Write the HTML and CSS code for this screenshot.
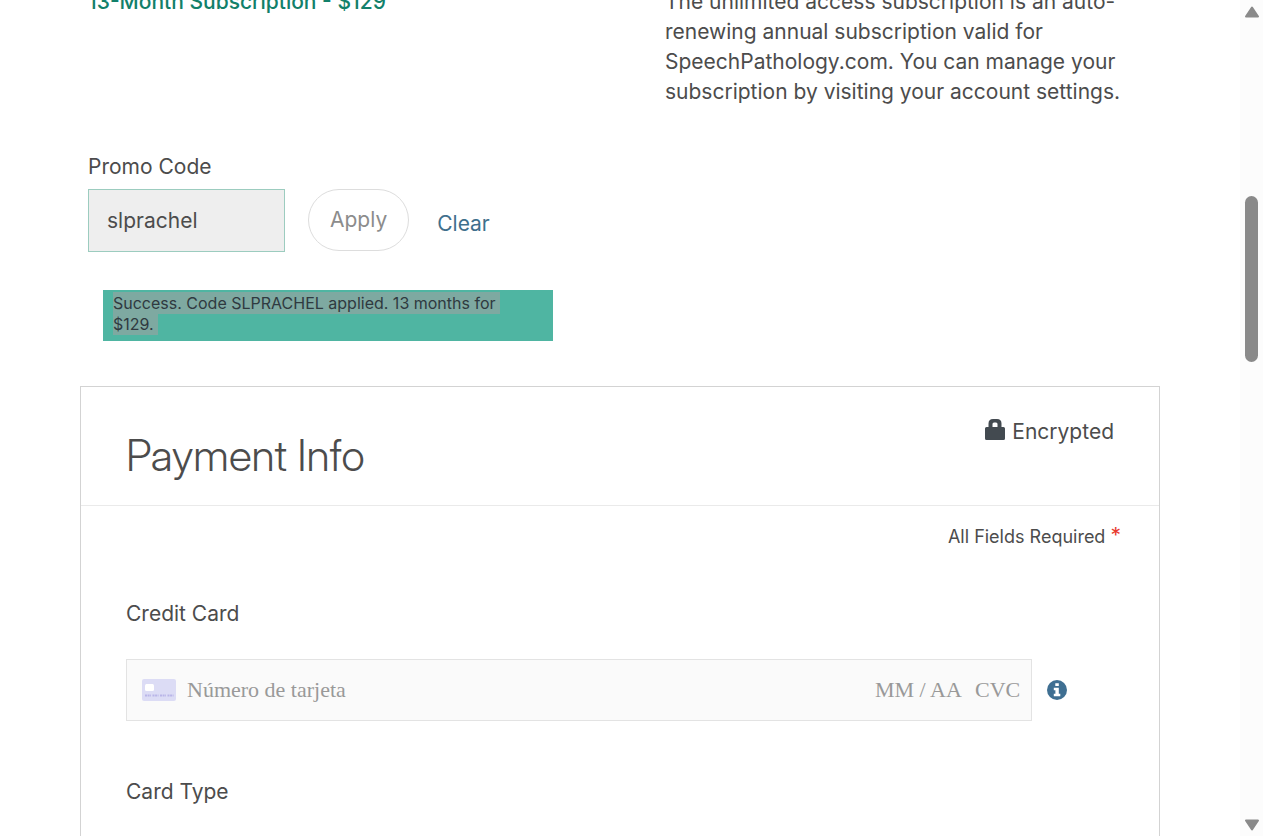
FILE: index.html
```html
<!DOCTYPE html>
<html lang="en">
<head>
<meta charset="utf-8">
<meta name="viewport" content="width=device-width, initial-scale=1">
<title>Payment Info</title>
<link rel="stylesheet" href="styles.css">
</head>
<body>
<div class="viewport">
  <main class="page">
    <section class="plan">
      <h2 class="plan-title">13-Month Subscription - $129</h2>
      <p class="plan-text">The unlimited access subscription is an auto-renewing annual subscription valid for SpeechPathology.com. You can manage your subscription by visiting your account settings.</p>
    </section>

    <form class="promo">
      <label class="label" for="promo-code">Promo Code</label>
      <div class="promo-row">
        <input class="promo-input" id="promo-code" type="text" value="slprachel" readonly>
        <button class="apply" type="button" disabled>Apply</button>
        <a class="clear" href="#">Clear</a>
      </div>
      <p class="alert" role="status"><mark class="selected">Success. Code SLPRACHEL applied. 13 months for $129.</mark></p>
    </form>

    <section class="payment">
      <header class="payment-head">
        <h1 class="payment-title">Payment Info</h1>
        <div class="encrypted">
          <svg class="lock" viewBox="0 0 20 22" aria-hidden="true"><path fill-rule="evenodd" d="M1.500 8H3.500V4.500Q3.500 0 8 0H12Q16.500 0 16.500 4.500V8H18.500Q20 8 20 9.500V19.500Q20 21 18.500 21H1.500Q0 21 0 19.500V9.500Q0 8 1.500 8ZM7.500 8H12.500V5Q12.500 3.500 11 3.500H9Q7.500 3.500 7.500 5Z"/></svg>
          <span>Encrypted</span>
        </div>
      </header>
      <form class="payment-body">
        <p class="required">All Fields Required <span class="star">*</span></p>
        <label class="label" for="card-number">Credit Card</label>
        <div class="card-row">
          <div class="card-field">
            <svg class="card-icon" viewBox="0 0 34 22" aria-hidden="true"><rect width="34" height="22" rx="2" fill="#dcdcf5"/><rect x="3" y="5" width="9" height="7" rx="1.500" fill="#fff"/><path d="M3 16.500h6m1.500 0h6m1.500 0h6m1.500 0h6" stroke="#b9b5e8" stroke-width="2" stroke-dasharray="2 .6"/></svg>
            <input class="card-input number" id="card-number" type="text" placeholder="Número de tarjeta">
            <input class="card-input expiry" type="text" placeholder="MM / AA" aria-label="MM / AA">
            <input class="card-input cvc" type="text" placeholder="CVC" aria-label="CVC">
          </div>
          <button class="info" type="button" aria-label="Info">
            <svg viewBox="0 0 20 20" aria-hidden="true"><circle cx="10" cy="10" r="10" fill="#3f6f92"/><path fill="#fff" d="M8.300 3.200h3.500v2.900H8.300zM6.800 7.700h5v6h1.500v2.500H6.800v-2.500h1.600v-3.500H6.800z"/></svg>
          </button>
        </div>
        <p class="label">Card Type</p>
      </form>
    </section>
  </main>

  <div class="scrollbar" aria-hidden="true">
    <svg class="arrow" viewBox="0 0 16 12"><path d="M8 1.500 14 10.500H2Z" stroke-width="2"/></svg>
    <div class="thumb"></div>
    <svg class="arrow" viewBox="0 0 16 12"><path d="M8 10.500 14 1.500H2Z" stroke-width="2"/></svg>
  </div>
</div>
</body>
</html>
```
FILE: styles.css
```css
* { box-sizing: border-box; }

body {
  margin: 0;
  background: #fff;
  color: #4c4c4c;
  font-family: Inter, "Liberation Sans", sans-serif;
  font-size: 21px;
  line-height: 30px;
}

h1, h2, p { margin: 0; }

input, button { font: inherit; color: inherit; }

.viewport {
  display: flex;
  height: 100vh;
  overflow: hidden;
}

.page {
  flex: 1;
  min-width: 0;
  padding: 0 80px;
}

.plan {
  display: grid;
  grid-template-columns: 1fr 1fr;
  gap: 118px;
  margin-top: -13px;
  padding: 0 36px 0 8px;
}

.plan-title {
  color: #12806a;
  font-size: 21px;
  font-weight: 500;
  line-height: 30px;
}

.promo { padding: 45px 8px 0; }

.label {
  display: block;
  line-height: 30px;
}

.promo-row {
  display: flex;
  align-items: flex-start;
  margin-top: 7px;
}

.promo-input {
  width: 197px;
  height: 63px;
  padding: 0 18px;
  border: 1px solid #9cccbf;
  border-radius: 0;
  background: #eee;
  outline: none;
}

.apply {
  height: 62px;
  margin-left: 23px;
  padding: 0 21px;
  border: 1px solid #ddd;
  border-radius: 31px;
  background: #fff;
  color: #8c8c8c;
}

.clear {
  margin-left: 28px;
  padding-top: 20px;
  color: #3f6f8c;
  text-decoration: none;
}

.alert {
  max-width: 450px;
  margin: 38px 0 0 15px;
  padding: 3px 32px 6px 10px;
  background: #4fb5a2;
  font-size: 16px;
  line-height: 21px;
}

.selected {
  padding: 1px 4px 1px 0;
  -webkit-box-decoration-break: clone;
  box-decoration-break: clone;
  background: #7ea9a1;
  color: #2f3a40;
}

.payment {
  margin-top: 45px;
  border: 1px solid #d3d3d3;
}

.payment-head {
  display: flex;
  justify-content: space-between;
  align-items: flex-start;
  padding: 30px 45px 22px;
  border-bottom: 1px solid #eaeaea;
}

.payment-title {
  padding-top: 10px;
  font-family: "Inter Display", Inter, "Liberation Sans", sans-serif;
  font-size: 43px;
  font-weight: 300;
  line-height: 56px;
}

.encrypted {
  display: flex;
  align-items: center;
  gap: 7px;
}

.lock {
  width: 20px;
  height: 22px;
  margin-bottom: 4px;
  fill: #434a50;
}

.payment-body { padding: 16px 45px 120px; }

.required {
  margin: 0 -7px 47px 0;
  font-size: 18px;
  text-align: right;
}

.star {
  color: #e8392f;
  font-size: 21px;
  line-height: 20px;
}

.card-row {
  display: flex;
  align-items: center;
  gap: 15px;
  margin: 30px 47px 56px 0;
}

.card-field {
  display: flex;
  flex: 1;
  align-items: center;
  height: 62px;
  padding: 0 9px 0 15px;
  border: 1px solid #e3e3e3;
  background: #fafafa;
}

.card-icon {
  width: 34px;
  height: 22px;
  margin-right: 11px;
}

.card-input {
  min-width: 0;
  padding: 0;
  border: 0;
  background: transparent;
  font-family: "Liberation Serif", serif;
  font-size: 22px;
  outline: none;
}

.card-input::placeholder { color: #999; opacity: 1; }

.number { flex: 1; }
.expiry { width: 100px; }
.cvc { width: 47px; }

.info {
  width: 20px;
  height: 20px;
  padding: 0;
  border: 0;
  background: none;
}

.info svg { display: block; }

.scrollbar {
  display: flex;
  flex-direction: column;
  align-items: center;
  width: 23px;
  padding: 6px 0 5px;
  background: #fcfcfc;
}

.arrow {
  width: 16px;
  height: 12px;
  fill: #8a8a8a;
  stroke: #8a8a8a;
  stroke-linejoin: round;
}

.thumb {
  width: 13px;
  height: 166px;
  margin: 178px 0 auto;
  border-radius: 7px;
  background: #8a8a8a;
}
```
